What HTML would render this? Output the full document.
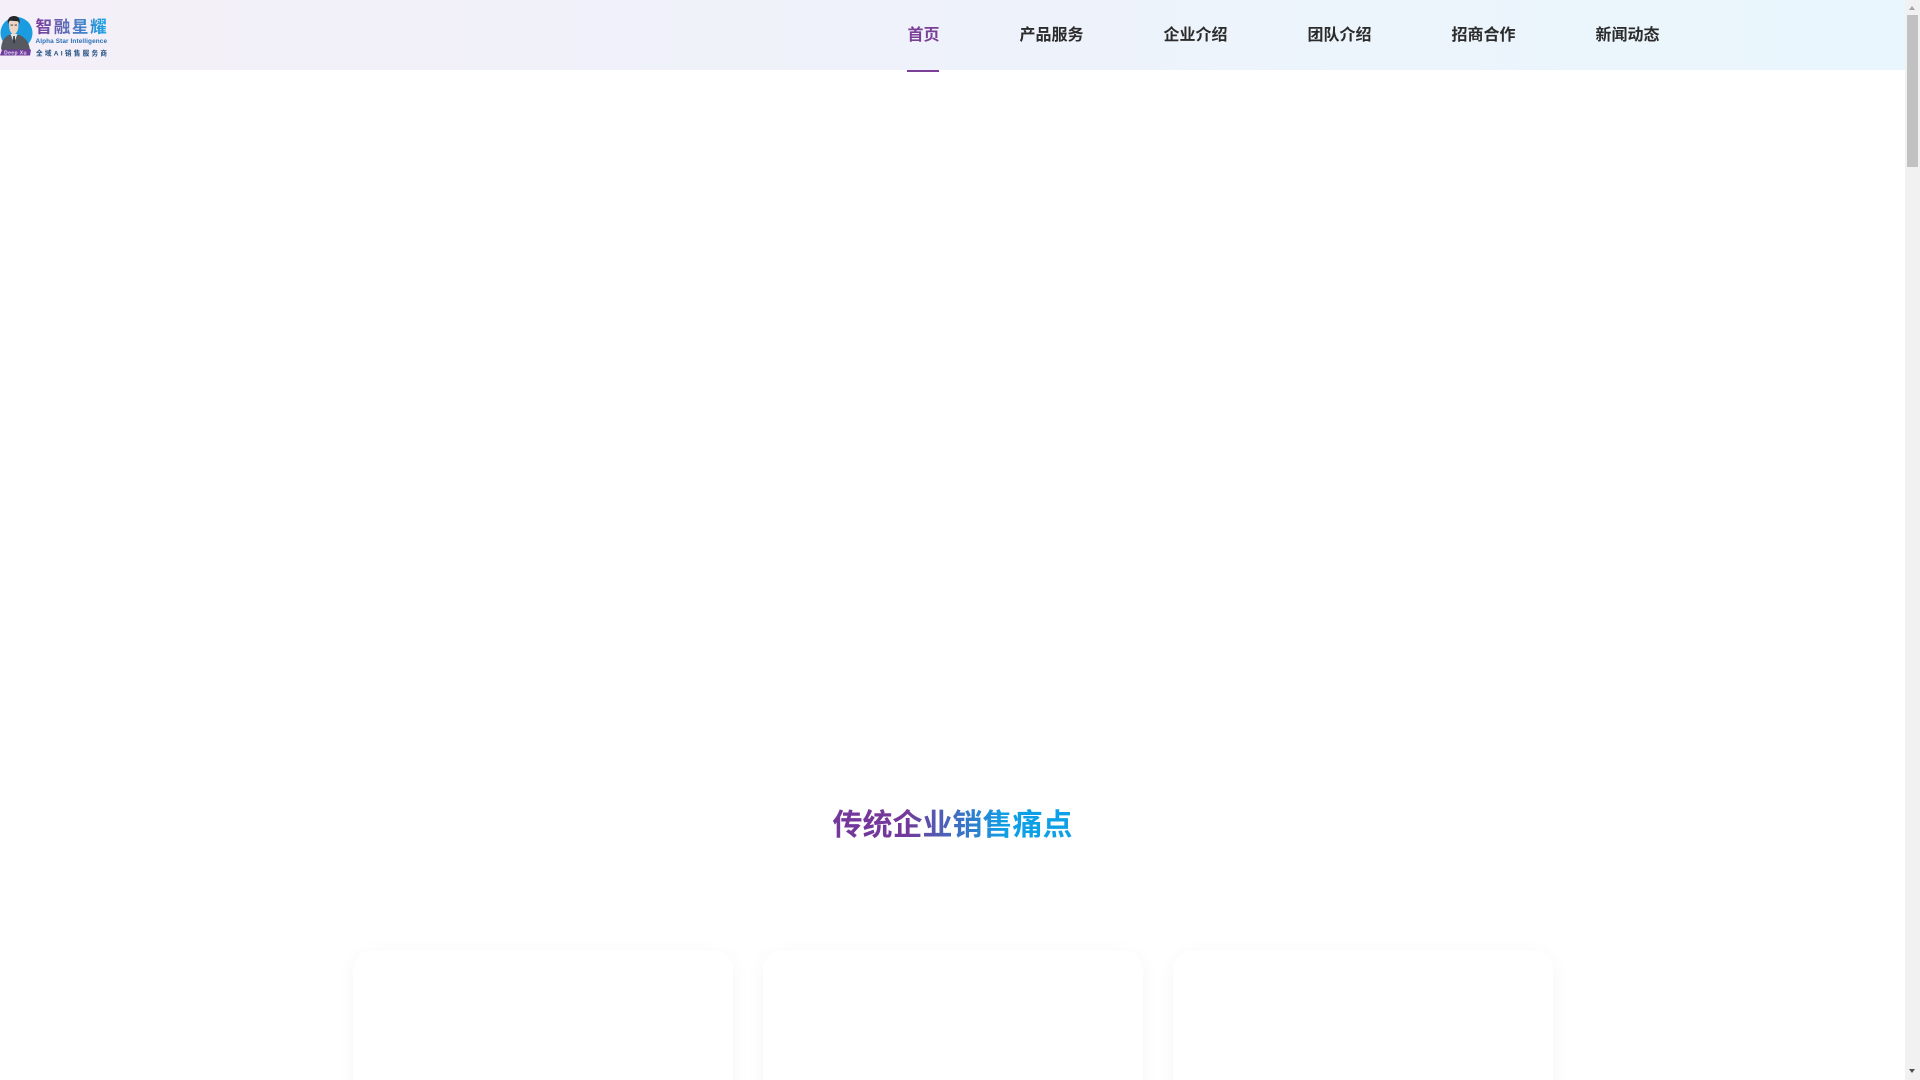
<!DOCTYPE html>
<html lang="zh-CN">
<head>
<meta charset="utf-8">
<title>智融星耀</title>
<style>
html,body{margin:0;padding:0;width:1920px;height:1080px;overflow:hidden;background:#fff;font-family:"Liberation Sans","Noto Sans CJK SC",sans-serif}
*{box-sizing:border-box}
.page{position:relative;width:1920px;height:1080px;overflow:hidden;background:#fff}
header{position:absolute;left:0;top:0;width:1905px;height:70px;background:linear-gradient(90deg,#f4eff8 0%,#e9f6fd 100%)}
.nav{position:absolute;top:25px;height:22px;line-height:22px;font-size:16px;font-weight:700;color:#2b2b2b;white-space:nowrap}
.nav.on{color:#7b3f98}
.ul{position:absolute;left:907px;top:70px;width:32px;height:2px;background:#7b3f98}
.logo-svg{position:absolute;left:0;top:12px;filter:blur(.35px)}
h2{position:absolute;left:0;top:802px;width:1905px;margin:0;text-align:center;font-size:30px;line-height:48px;font-weight:700}
h2 span{display:inline-block;background:linear-gradient(90deg,#74389a 0%,#74389a 30%,#0ea0e6 72%,#0ea0e6 100%);-webkit-background-clip:text;background-clip:text;color:transparent}
.card{position:absolute;top:950px;width:380px;height:300px;background:#fff;border-radius:20px;box-shadow:0 4px 20px rgba(0,0,0,.045)}
.sb{position:absolute;left:1905px;top:0;width:15px;height:1080px;background:#f1f1f1}
.thumb{position:absolute;left:2px;top:15px;width:11px;height:152px;background:#c1c1c1}
.arr{position:absolute;left:4px;width:0;height:0;border-left:3.5px solid transparent;border-right:3.5px solid transparent}
.arr.u{top:6px;border-bottom:4px solid #a3a3a3}
.arr.d{top:1069px;border-top:4px solid #505050}
</style>
</head>
<body>
<div class="page">
<header>
<svg class="logo-svg" width="110" height="46" viewBox="0 0 110 46" xmlns="http://www.w3.org/2000/svg">
<defs>
<linearGradient id="lg" x1="36" x2="107" y1="0" y2="0" gradientUnits="userSpaceOnUse">
<stop offset="0" stop-color="#7a3b9c"/><stop offset=".45" stop-color="#5a6fb8"/><stop offset="1" stop-color="#12a3e6"/>
</linearGradient>
<clipPath id="cc"><rect x="0" y="0" width="34" height="37.5"/></clipPath>
</defs>
<circle cx="16.5" cy="21" r="16" fill="#1b9be0"/>
<g clip-path="url(#cc)">
<path d="M1 38 C1.5 27 5.5 24.5 10 22.5 L17.5 22.5 C22.5 24 28.5 27 30 38 Z" fill="#565a60"/>
<path d="M10.5 22 L14 31 L17.5 22 Z" fill="#e4e7ea"/>
<path d="M13.2 24 L14.8 24 L15 30 L14 32 L13 30 Z" fill="#33363b"/>
<path d="M8.8 10 C8.8 7.5 18.6 7.5 18.6 10 L18.2 16.5 C17.5 20 15.2 22.5 13.7 22.5 C12.2 22.5 10 20 9.3 16.5 Z" fill="#eed4c2"/>
<path d="M8 12 C6.8 6 10.5 3.8 14.5 4 C18.5 4.2 20.5 7 19.4 12 L18.2 9.4 C15.5 9 12.5 9.2 9.6 8.8 Z" fill="#25272b"/>
<rect x="10.6" y="12.6" width="2.4" height=".9" fill="#333"/><rect x="14.6" y="12.6" width="2.4" height=".9" fill="#333"/>
</g>
<path d="M2 37.5 L31 37.5 L30 43.5 L0 43.5 Z" fill="#6f3d9c"/>
<text x="15.5" y="42.3" font-size="5" font-weight="700" fill="#e8ddf2" text-anchor="middle" letter-spacing=".4" font-family="Liberation Sans, sans-serif">Deep Xu</text>
<text x="35.5" y="20.5" font-size="16.6" font-weight="700" fill="url(#lg)" letter-spacing="1.6" font-family="Liberation Sans, Noto Sans CJK SC, sans-serif">智融星耀</text>
<text x="35.5" y="31" font-size="6.4" font-weight="700" fill="#2a6fb5" textLength="71.5" lengthAdjust="spacing" font-family="Liberation Sans, sans-serif">Alpha Star Intelligence</text>
<text x="36" y="43.5" font-size="6.6" font-weight="700" fill="#1f4f80" textLength="71" lengthAdjust="spacing" font-family="Liberation Sans, Noto Sans CJK SC, sans-serif">全域AI销售服务商</text>
</svg>
<div class="nav on" style="left:907.5px">首页</div>
<div class="nav" style="left:1019.5px">产品服务</div>
<div class="nav" style="left:1163.5px">企业介绍</div>
<div class="nav" style="left:1307.5px">团队介绍</div>
<div class="nav" style="left:1451.5px">招商合作</div>
<div class="nav" style="left:1595.5px">新闻动态</div>
</header>
<div class="ul"></div>
<h2><span>传统企业销售痛点</span></h2>
<div class="card" style="left:352.5px"></div>
<div class="card" style="left:762.5px"></div>
<div class="card" style="left:1172.5px"></div>
<div class="sb"><div class="arr u"></div><div class="thumb"></div><div class="arr d"></div></div>
</div>
</body>
</html>
